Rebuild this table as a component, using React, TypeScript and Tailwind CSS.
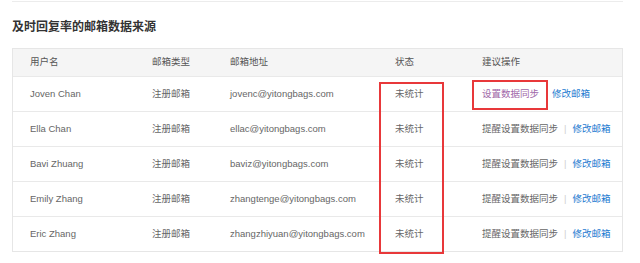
import React from "react";

const rows = [
  { name: "Joven Chan", email: "jovenc@yitongbags.com", first: true },
  { name: "Ella Chan", email: "ellac@yitongbags.com" },
  { name: "Bavi Zhuang", email: "baviz@yitongbags.com" },
  { name: "Emily Zhang", email: "zhangtenge@yitongbags.com" },
  { name: "Eric Zhang", email: "zhangzhiyuan@yitongbags.com" },
];

const font = {
  fontFamily: '"Liberation Sans", Arial, "Noto Sans CJK SC", sans-serif',
};

export default function App() {
  return (
    <div className="w-[640px] h-[263px] bg-white overflow-hidden" style={font}>
      <div className="ml-[12px] w-[611px] pt-[1px]">
        <div className="h-px bg-[#ececec]" />
        <div className="mt-[17px] text-[12px] leading-[16px] font-bold text-[#333]">
          及时回复率的邮箱数据来源
        </div>
        <div className="relative mt-[13px] border border-[#e6e6e6] text-[9.5px] text-[#666]">
          <div className="grid grid-cols-[122px_78px_165px_87px_1fr] pl-[17px] h-[27px] items-center bg-[#f5f5f5] text-[#555]">
            <div>用户名</div>
            <div>邮箱类型</div>
            <div>邮箱地址</div>
            <div>状态</div>
            <div>建议操作</div>
          </div>
          {rows.map((r) => (
            <div
              key={r.name}
              className="grid grid-cols-[122px_78px_165px_87px_1fr] pl-[17px] h-[35px] items-center border-t border-[#e9e9e9]"
            >
              <div>{r.name}</div>
              <div>注册邮箱</div>
              <div>{r.email}</div>
              <div>未统计</div>
              <div className="flex items-center">
                {r.first ? (
                  <>
                    <span className="text-[#a066a8]">设置数据同步</span>
                    <span className="ml-[13px] text-[#1c7ad0]">修改邮箱</span>
                  </>
                ) : (
                  <>
                    <span className="text-[#666]">提醒设置数据同步</span>
                    <span className="mx-[6px] text-[#d0d0d0]">|</span>
                    <span className="text-[#1c7ad0]">修改邮箱</span>
                  </>
                )}
              </div>
            </div>
          ))}
          <div className="absolute left-[366px] top-[33px] w-[65px] h-[172px] border-2 border-[#e8383a] pointer-events-none" />
          <div className="absolute left-[459px] top-[31px] w-[76px] h-[30px] border-2 border-[#e8383a] pointer-events-none" />
        </div>
      </div>
    </div>
  );
}
